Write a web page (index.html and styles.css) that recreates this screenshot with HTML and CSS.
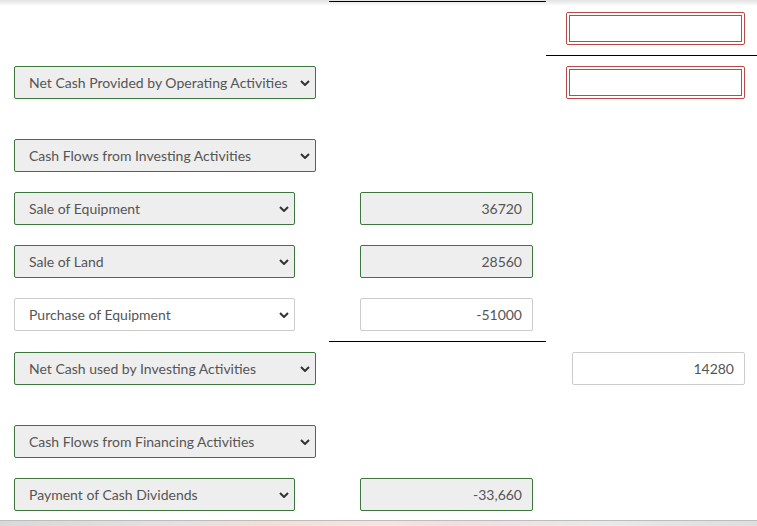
FILE: index.html
```html
<!DOCTYPE html>
<html>
<head>
<meta charset="utf-8">
<link rel="stylesheet" href="styles.css">
</head>
<body>
<div class="topshade"></div>
<div class="sheet">
  <div class="row stub">
    <div class="cell"></div>
    <div class="cell ruled"></div>
    <div class="cell"></div>
  </div>

  <div class="row">
    <div class="cell"></div>
    <div class="cell"></div>
    <div class="cell c3 ruled"><div class="err"><input class="inner" type="text" value=""></div></div>
  </div>

  <div class="row">
    <div class="cell c1"><div class="sel ok wide"><span>Net Cash Provided by Operating Activities</span><svg class="chev" viewBox="0 0 10 6"><path d="M1 1l4 4 4-4"/></svg></div></div>
    <div class="cell"></div>
    <div class="cell c3"><div class="err"><input class="inner" type="text" value=""></div></div>
  </div>

  <div class="row head">
    <div class="cell c1"><div class="sel ok wide"><span>Cash Flows from Investing Activities</span><svg class="chev" viewBox="0 0 10 6"><path d="M1 1l4 4 4-4"/></svg></div></div>
    <div class="cell"></div>
    <div class="cell"></div>
  </div>

  <div class="row">
    <div class="cell c1"><div class="sel ok"><span>Sale of Equipment</span><svg class="chev" viewBox="0 0 10 6"><path d="M1 1l4 4 4-4"/></svg></div></div>
    <div class="cell c2"><div class="num ok">36720</div></div>
    <div class="cell"></div>
  </div>

  <div class="row">
    <div class="cell c1"><div class="sel ok"><span>Sale of Land</span><svg class="chev" viewBox="0 0 10 6"><path d="M1 1l4 4 4-4"/></svg></div></div>
    <div class="cell c2"><div class="num ok">28560</div></div>
    <div class="cell"></div>
  </div>

  <div class="row">
    <div class="cell c1"><div class="sel"><span>Purchase of Equipment</span><svg class="chev" viewBox="0 0 10 6"><path d="M1 1l4 4 4-4"/></svg></div></div>
    <div class="cell c2 ruled"><div class="num">-51000</div></div>
    <div class="cell"></div>
  </div>

  <div class="row">
    <div class="cell c1"><div class="sel ok wide"><span>Net Cash used by Investing Activities</span><svg class="chev" viewBox="0 0 10 6"><path d="M1 1l4 4 4-4"/></svg></div></div>
    <div class="cell"></div>
    <div class="cell c3b"><div class="num">14280</div></div>
  </div>

  <div class="row head">
    <div class="cell c1"><div class="sel ok wide"><span>Cash Flows from Financing Activities</span><svg class="chev" viewBox="0 0 10 6"><path d="M1 1l4 4 4-4"/></svg></div></div>
    <div class="cell"></div>
    <div class="cell"></div>
  </div>

  <div class="row">
    <div class="cell c1"><div class="sel ok"><span>Payment of Cash Dividends</span><svg class="chev" viewBox="0 0 10 6"><path d="M1 1l4 4 4-4"/></svg></div></div>
    <div class="cell c2"><div class="num ok">-33,660</div></div>
    <div class="cell"></div>
  </div>
</div>
<div class="footer"></div>
</body>
</html>
```

FILE: styles.css
```css
html, body {
  margin: 0;
  padding: 0;
  background: #fff;
  overflow: hidden;
  height: 526px;
}
body {
  font-family: Lato, "Open Sans", sans-serif;
  font-size: 14px;
  color: #555;
  position: relative;
}
.topshade {
  position: absolute;
  left: 0;
  top: 0;
  width: 100%;
  height: 6px;
  background: linear-gradient(#e2e2e2, rgba(255,255,255,0));
  pointer-events: none;
}
.sheet {
  width: 757px;
  position: relative;
}
.row {
  display: grid;
  grid-template-columns: 329px 217px 211px;
}
.cell {
  padding: 10px 0;
  box-sizing: border-box;
}
.stub .cell {
  padding: 0;
  height: 2px;
}
.head .cell {
  padding-top: 30px;
}
.ruled {
  border-bottom: 1px solid #000;
}
.c1 { padding-left: 14px; }
.c2 { padding-left: 31px; }
.c3 { padding-left: 20px; }
.c3b { padding-left: 26px; }

.sel {
  box-sizing: border-box;
  width: 281px;
  height: 33px;
  border: 1px solid #ccc;
  border-radius: 2px;
  background: #fff;
  display: flex;
  align-items: center;
  justify-content: space-between;
  padding: 0 5px 0 14px;
  color: #555;
}
.sel.wide { width: 302px; }
.ok {
  border-color: #3c763d;
  background: #eee;
}
.chev {
  width: 10px;
  height: 6px;
  fill: none;
  stroke: #333;
  stroke-width: 2;
}
.num {
  box-sizing: border-box;
  width: 173px;
  height: 33px;
  border: 1px solid #ccc;
  border-radius: 2px;
  background: #fff;
  display: flex;
  align-items: center;
  justify-content: flex-end;
  padding-right: 10px;
  color: #555;
}
.num.ok {
  border-color: #3c763d;
  background: #eee;
}
.err {
  box-sizing: border-box;
  width: 179px;
  height: 33px;
  border: 1px solid #b94a48;
  border-radius: 2px;
  padding: 2px;
  background: #fff;
  display: flex;
}
.inner {
  box-sizing: border-box;
  width: 100%;
  height: 100%;
  border: 1px solid #b94a48;
  margin: 0;
  padding: 0;
  background: #fff;
  outline: none;
}
.footer {
  position: absolute;
  left: 0;
  top: 520px;
  width: 757px;
  height: 6px;
  border-top: 1px solid #bdbdbd;
  background: linear-gradient(90deg, #d9d9d9 0%, #e6e2de 25%, #f2e0d3 35%, #f6e5df 50%, #f3dedd 60%, #e9e9e9 80%, #dedede 100%);
}
```
